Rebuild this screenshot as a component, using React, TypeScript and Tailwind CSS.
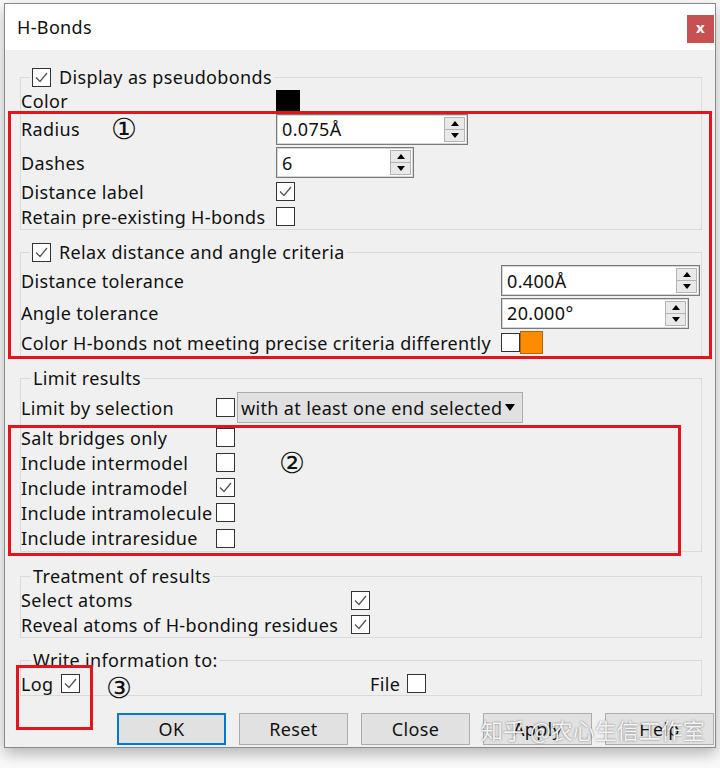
import React from 'react';

function Check({ checked = false, className = '' }: { checked?: boolean; className?: string }) {
  return (
    <span className={`inline-flex h-[19px] w-[19px] shrink-0 items-center justify-center border border-[#333] bg-white ${className}`}>
      {checked && (
        <svg viewBox="0 0 17 17" className="h-[17px] w-[17px]">
          <polyline points="3,8.5 7,12.5 14,4" fill="none" stroke="#555" strokeWidth="1.3" />
        </svg>
      )}
    </span>
  );
}

function Arrow({ down = false }: { down?: boolean }) {
  return (
    <svg viewBox="0 0 8 5" className="h-[5px] w-[8px]">
      <polygon points={down ? '0,0 8,0 4,5' : '0,5 8,5 4,0'} fill="#000" />
    </svg>
  );
}

function SpinBox({ value, className }: { value: string; className: string }) {
  return (
    <div className={`flex h-[31px] shrink-0 items-center justify-between border border-[#7a7a7a] bg-white shadow-[inset_0_0_0_1px_#d6d6d6] ${className}`}>
      <span className="pl-[5px]">{value}</span>
      <div className="mr-[2px] flex h-[25px] w-[21px] flex-col border border-[#b4b4b4] bg-[#e9e9e9]">
        <div className="flex flex-1 items-center justify-center border-b border-[#b4b4b4]">
          <Arrow />
        </div>
        <div className="flex flex-1 items-center justify-center">
          <Arrow down />
        </div>
      </div>
    </div>
  );
}

function Row({ label, h, lw, children }: { label: string; h: string; lw: string; children?: React.ReactNode }) {
  return (
    <div className={`flex items-center ${h}`}>
      <span className={`shrink-0 whitespace-nowrap ${lw}`}>{label}</span>
      {children}
    </div>
  );
}

function Button({ label, primary = false }: { label: string; primary?: boolean }) {
  return (
    <div
      className={`flex h-[32px] w-[109px] shrink-0 items-center justify-center bg-[#e1e1e1] ${
        primary ? 'border-2 border-[#0078d7]' : 'border border-[#adadad]'
      }`}
    >
      {label}
    </div>
  );
}

export default function App() {
  return (
    <div className="relative h-[768px] w-[720px] overflow-hidden bg-[#fafafa] font-['Noto_Sans',sans-serif] text-[18px] leading-none tracking-[0.35px] text-[#111]">
      <div className="ml-[4px] mt-[3px] h-[745px] w-[712px] border border-[#8a8a8a] bg-[#f0f0f0] shadow-[0_6px_14px_rgba(0,0,0,0.28)]">
        {/* title bar */}
        <div className="flex h-[46px] items-start justify-between bg-white">
          <span className="pl-[12px] leading-[46px]">H-Bonds</span>
          <div className="mr-[1px] mt-[11px] flex h-[28px] w-[27px] items-center justify-center bg-[#c75050] pb-[3px] text-[15px] font-bold text-white">
            x
          </div>
        </div>

        <div className="pl-[15px] pr-[13px] pt-[15px]">
          {/* display as pseudobonds */}
          <fieldset className="min-w-0 border border-[#dadada] p-0">
            <legend className="ml-[9px] px-[2px]">
              <span className="flex h-[24px] items-center gap-[8px]">
                <Check checked />
                Display as pseudobonds
              </span>
            </legend>
            <Row label="Color" h="h-[23px]" lw="w-[255px]">
              <span className="h-[22px] w-[24px] bg-black" />
            </Row>
            <Row label="Radius" h="h-[34px]" lw="w-[255px]">
              <SpinBox value="0.075Å" className="w-[192px]" />
            </Row>
            <Row label="Dashes" h="h-[33px]" lw="w-[255px]">
              <SpinBox value="6" className="w-[138px]" />
            </Row>
            <Row label="Distance label" h="h-[25px]" lw="w-[255px]">
              <Check checked />
            </Row>
            <Row label="Retain pre-existing H-bonds" h="h-[25px]" lw="w-[255px]">
              <Check />
            </Row>
          </fieldset>

          {/* relax criteria */}
          <fieldset className="mt-[10px] min-w-0 border border-[#dadada] p-0">
            <legend className="ml-[9px] px-[2px]">
              <span className="flex h-[24px] items-center gap-[8px]">
                <Check checked />
                Relax distance and angle criteria
              </span>
            </legend>
            <Row label="Distance tolerance" h="h-[33px]" lw="w-[480px]">
              <SpinBox value="0.400Å" className="w-[199px]" />
            </Row>
            <Row label="Angle tolerance" h="h-[32px]" lw="w-[480px]">
              <SpinBox value="20.000°" className="w-[188px]" />
            </Row>
            <Row label="Color H-bonds not meeting precise criteria differently" h="h-[27px]" lw="w-[480px]">
              <Check />
              <span className="h-[23px] w-[23px] border border-[#b86400] bg-[#ff8c00]" />
            </Row>
          </fieldset>

          {/* limit results */}
          <fieldset className="mt-[9px] min-w-0 border border-[#dadada] p-0">
            <legend className="ml-[10px] px-[2px]">
              <span className="flex h-[24px] items-center">Limit results</span>
            </legend>
            <Row label="Limit by selection" h="h-[35px]" lw="w-[195px]">
              <Check />
              <div className="ml-[2px] flex h-[31px] w-[286px] items-center gap-[3px] whitespace-nowrap border border-[#adadad] bg-[#e1e1e1] pl-[3px]">
                with at least one end selected
                <svg viewBox="0 0 10 7" className="h-[7px] w-[10px]">
                  <polygon points="0,0 10,0 5,7" fill="#000" />
                </svg>
              </div>
            </Row>
            <Row label="Salt bridges only" h="h-[25px]" lw="w-[195px]">
              <Check />
            </Row>
            <Row label="Include intermodel" h="h-[25px]" lw="w-[195px]">
              <Check />
            </Row>
            <Row label="Include intramodel" h="h-[25px]" lw="w-[195px]">
              <Check checked />
            </Row>
            <Row label="Include intramolecule" h="h-[25px]" lw="w-[195px]">
              <Check />
            </Row>
            <Row label="Include intraresidue" h="h-[26px]" lw="w-[195px]">
              <Check />
            </Row>
          </fieldset>

          {/* treatment */}
          <fieldset className="mt-[12px] min-w-0 border border-[#dadada] p-0">
            <legend className="ml-[10px] px-[2px]">
              <span className="flex h-[24px] items-center">Treatment of results</span>
            </legend>
            <Row label="Select atoms" h="h-[24px]" lw="w-[330px]">
              <Check checked />
            </Row>
            <Row label="Reveal atoms of H-bonding residues" h="h-[25px]" lw="w-[330px]">
              <Check checked />
            </Row>
          </fieldset>

          {/* write info */}
          <fieldset className="mt-[10px] min-w-0 border border-[#dadada] p-0">
            <legend className="ml-[10px] px-[2px]">
              <span className="flex h-[24px] items-center">Write information to:</span>
            </legend>
            <div className="flex h-[23px] items-center">
              <div className="flex w-[349px] items-center">
                Log
                <Check checked className="ml-[8px]" />
              </div>
              File
              <Check className="ml-[7px]" />
            </div>
          </fieldset>

          <div className="ml-[97px] mt-[17px] flex gap-[13px]">
            <Button label="OK" primary />
            <Button label="Reset" />
            <Button label="Close" />
            <Button label="Apply" />
            <Button label="Help" />
          </div>
        </div>
      </div>

      {/* annotation overlays */}
      <div className="absolute left-[8px] top-[111px] h-[248px] w-[704px] border-[3px] border-[#e3141b]" />
      <div className="absolute left-[8px] top-[425px] h-[131px] w-[673px] border-[3px] border-[#e3141b]" />
      <div className="absolute left-[16px] top-[665px] h-[65px] w-[77px] border-[3px] border-[#e3141b]" />
      <span className="absolute left-[111px] top-[115px] font-['DejaVu_Serif','DejaVu_Sans',serif] text-[29px] leading-none">①</span>
      <span className="absolute left-[279px] top-[449px] font-['DejaVu_Serif','DejaVu_Sans',serif] text-[29px] leading-none">②</span>
      <span className="absolute left-[106px] top-[674px] font-['DejaVu_Serif','DejaVu_Sans',serif] text-[29px] leading-none">③</span>

      <span className="absolute left-[481px] top-[718px] whitespace-nowrap font-['Noto_Sans_CJK_SC',sans-serif] text-[22px] leading-none tracking-normal text-white/90 [text-shadow:0_0_2px_rgba(0,0,0,0.55)]">
        知乎 @农心生信工作室
      </span>
    </div>
  );
}
